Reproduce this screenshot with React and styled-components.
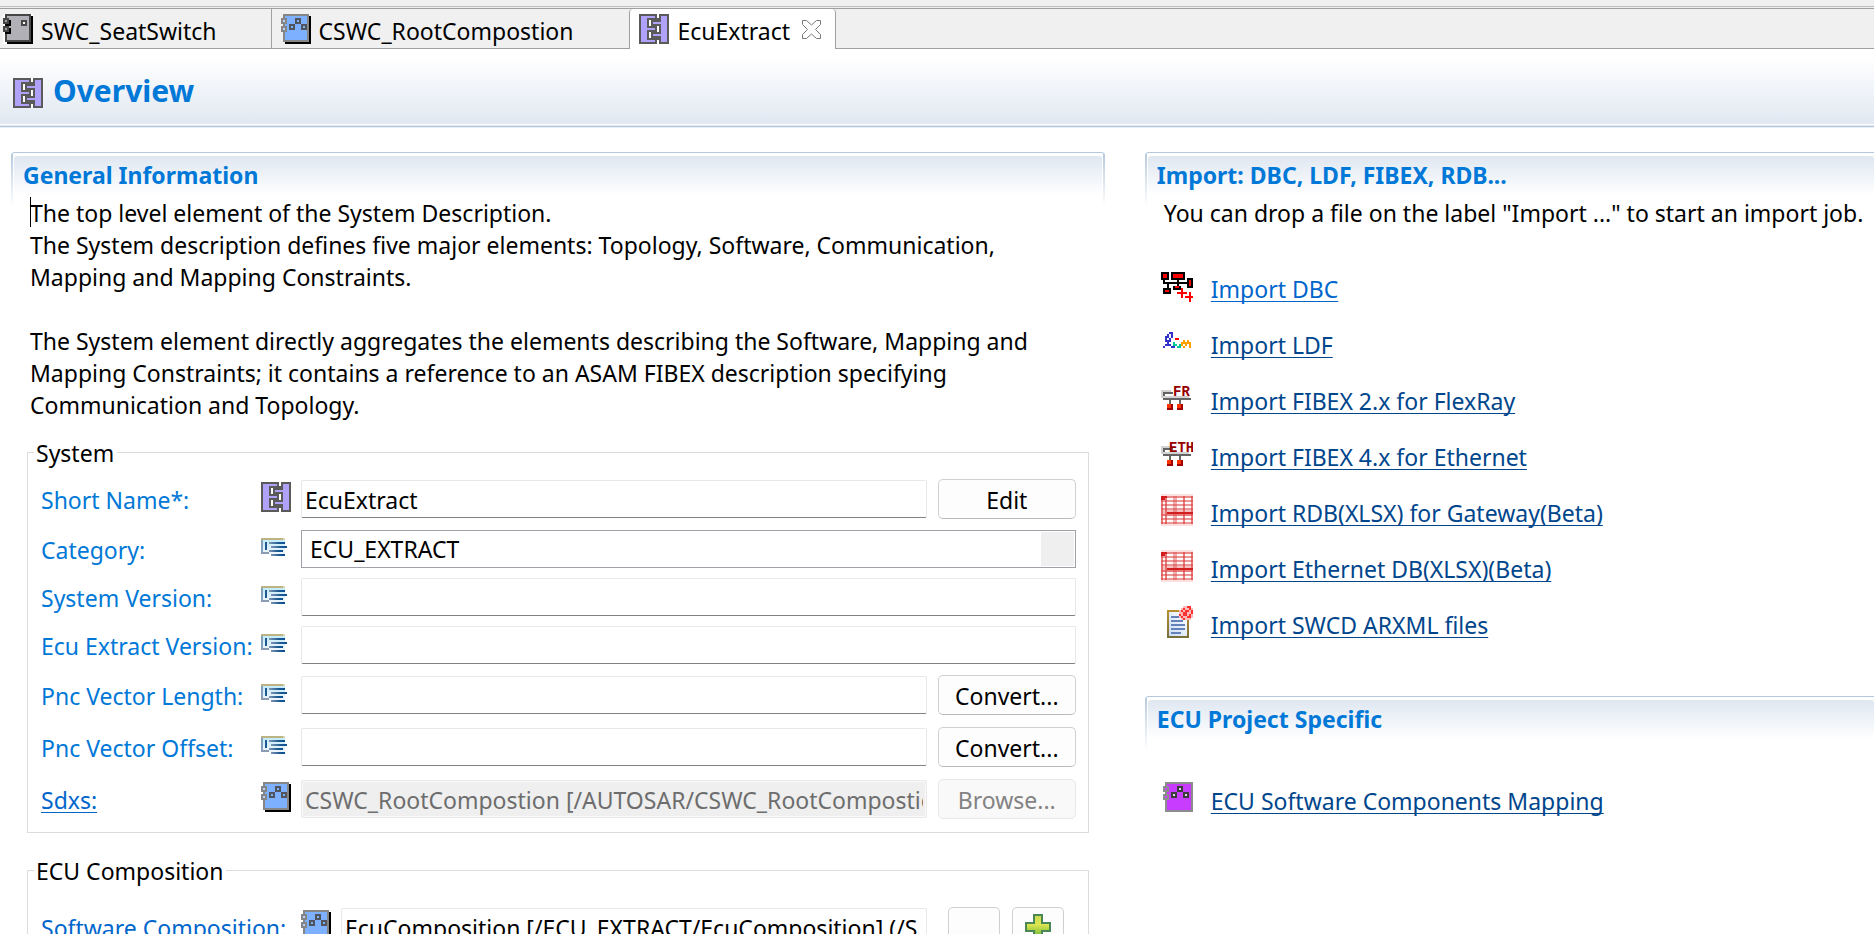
import React from 'react'
import styled, { createGlobalStyle, css } from 'styled-components'

/* ---------- icons ---------- */

const PixelMap = ({ rows, colors, x = 0, y = 0 }) =>
  rows.map((row, r) =>
    [...row].map((key, c) =>
      colors[key] ? (
        <rect
          key={`${r}-${c}`}
          x={x + c}
          y={y + r}
          width='1'
          height='1'
          fill={colors[key]}
        />
      ) : null
    )
  )

const systemRows = [
  '#########.#####',
  '#ooooooo#.#ooo#',
  '#ooo#######ooo#',
  '#ooo#.#####ooo#',
  '#ooo#.#ooooooo#',
  '#ooo#.#####ooo#',
  '#ooo#####.#ooo#',
  '#ooooooo#.#ooo#',
  '#ooo#####.#ooo#',
  '#ooo#.#####ooo#',
  '#ooo#.#ooooooo#',
  '#ooo#.#####ooo#',
  '#ooo#######ooo#',
  '#ooooooo#.#ooo#',
  '#########.#####',
]

const SystemIcon = () => (
  <svg width='30' height='30' viewBox='0 0 15 15' shapeRendering='crispEdges'>
    <rect width='15' height='15' fill='#fff' />
    <PixelMap rows={systemRows} colors={{ '#': '#5a5a5a', o: '#b0a2f8' }} />
  </svg>
)

const Port = ({ x, y, stroke, fill }) => (
  <>
    <rect x={x} y={y} width='3' height='3' fill={stroke} />
    <rect x={x + 1} y={y + 1} width='1' height='1' fill={fill} />
  </>
)

const SwcIcon = () => (
  <svg width='30' height='30' viewBox='0 0 15 15' shapeRendering='crispEdges'>
    <rect width='15' height='15' fill='#fff' />
    <rect x='2' y='1' width='13' height='14' fill='#000' />
    <rect x='1' y='0' width='13' height='14' fill='#464646' />
    <rect x='2' y='1' width='11' height='12' fill='#b0b0b6' />
    <path d='M1 3h3v3H1zM1 7h3v3H1z' fill='#000' />
    <Port x={0} y={2} stroke='#464646' fill='#a0a0a0' />
    <Port x={0} y={6} stroke='#464646' fill='#a0a0a0' />
    <Port x={9} y={3} stroke='#464646' fill='#fff' />
  </svg>
)

const CompositionIcon = () => (
  <svg width='30' height='30' viewBox='0 0 15 15' shapeRendering='crispEdges'>
    <rect x='2' y='1' width='13' height='14' fill='#000' />
    <rect x='1' y='0' width='13' height='14' fill='#868686' />
    <rect x='2' y='1' width='11' height='12' fill='#7db1ff' />
    <Port x={0} y={2} stroke='#868686' fill='#b4d2ff' />
    <Port x={0} y={6} stroke='#868686' fill='#b4d2ff' />
    <Port x={7} y={2} stroke='#50545c' fill='#7db1ff' />
    <Port x={4} y={5} stroke='#50545c' fill='#7db1ff' />
    <Port x={10} y={5} stroke='#50545c' fill='#7db1ff' />
  </svg>
)

const AttributeIcon = () => (
  <svg width='26' height='18' viewBox='0 0 13 9' shapeRendering='crispEdges'>
    <defs>
      <linearGradient id='attrLine' x1='0' x2='1'>
        <stop offset='0' stopColor='#8096b4' />
        <stop offset='0.6' stopColor='#1e5a91' />
        <stop offset='1' stopColor='#0a5096' />
      </linearGradient>
      <linearGradient id='attrFill' x1='0' x2='0' y1='0' y2='1'>
        <stop offset='0' stopColor='#c3ebfa' />
        <stop offset='1' stopColor='#f0f5fa' />
      </linearGradient>
    </defs>
    <rect x='0' y='1' width='12' height='7' fill='url(#attrFill)' />
    <rect x='0' y='0' width='11' height='1' fill='#bcb482' />
    <rect x='11' y='0' width='1' height='1' fill='#dcd8b4' />
    <rect x='0' y='1' width='1' height='7' fill='#82a0be' />
    <rect x='0' y='7' width='4' height='1' fill='#8c9ab4' />
    <rect x='2' y='2' width='1' height='4' fill='#1e5a91' />
    <rect x='4' y='2' width='8' height='1' fill='url(#attrLine)' />
    <rect x='5' y='4' width='8' height='1' fill='url(#attrLine)' />
    <rect x='4' y='6' width='7' height='1' fill='url(#attrLine)' />
    <rect x='5' y='8' width='7' height='1' fill='url(#attrLine)' />
  </svg>
)

const CloseIcon = () => (
  <svg width='19' height='19' viewBox='0 0 19 19'>
    <path
      d='M.5.5h4l5 4.500 5-4.500h4v4l-5 5 5 5v4h-4l-5-4.500-5 4.500h-4v-4l5-5-5-5z'
      fill='#fff'
      stroke='#787878'
    />
  </svg>
)

const PlusIcon = () => (
  <svg width='26' height='26' viewBox='0 0 13 13'>
    <defs>
      <linearGradient id='plusFill' x1='0' x2='0' y1='0' y2='1'>
        <stop offset='0' stopColor='#c8dc50' />
        <stop offset='0.4' stopColor='#dce650' />
        <stop offset='1' stopColor='#5aaf32' />
      </linearGradient>
    </defs>
    <path
      d='M4.500.5h4v4h4v4h-4v4h-4v-4h-4v-4h4z'
      fill='url(#plusFill)'
      stroke='#4b8755'
    />
  </svg>
)

const DbcIcon = () => (
  <svg width='32' height='32' viewBox='0 0 16 16' shapeRendering='crispEdges'>
    <path
      d='M0 1h4v4H0zM5 1h7v4H5zM13 4h3v5h-3zM1 5h1v1H1zM8 5h1v1H8zM1 6h12v1H1zM3 7h1v2H3zM8 7h1v1H8zM1 9h4v3H1zM6 8h4v2H6z'
      fill='#000'
    />
    <path
      d='M1 2h2v2H1zM6 2h5v2H6zM14 5h1v3h-1zM2 10h2v1H2zM7 8h2v1H7z'
      fill='#f00'
    />
    <path d='M8 11h5v1H8zM10 9h1v5h-1zM12 13h4v1h-4zM14 11h1v5h-1z' fill='#f00' />
  </svg>
)

const ldfRows = [
  '...bb.........',
  '..b.b.........',
  '.bb.b.........',
  '.b.b..rr......',
  '.bbb......o.o.',
  '..b..g...ooooo',
  '.bbb.gg.go.o.o',
  'b...bb.gg.o..o',
]

const LdfIcon = () => (
  <svg width='32' height='32' viewBox='0 0 16 16' shapeRendering='crispEdges'>
    <PixelMap
      rows={ldfRows}
      colors={{ b: '#3232c8', r: '#f00', g: '#00c896', o: '#ffa000' }}
      x={1}
      y={3}
    />
  </svg>
)

const FibexIcon = ({ tag, start }) => (
  <svg width='32' height='32' viewBox='0 0 32 32' shapeRendering='crispEdges'>
    <path d='M0 8h10v2H4v4h24v2H0z' fill='#d2d2d2' />
    <path d='M2 10h10v2H4v4H2zM2 16h28v2H2zM8 18h2v4H8zM18 18h2v4h-2z' fill='#646464' />
    <path d='M4 12h8v4H4z' fill='#fff' />
    <path d='M0 12h2v4H0zM2 14h26v2H2z' fill='#d2d2d2' />
    <path d='M6 22h6v6H6zM16 22h6v6h-6z' fill='#a00000' />
    <path d='M6 22h4v4H6zM16 22h4v4h-4z' fill='#ff3200' />
    <text
      x={start}
      y='14'
      fill='#960000'
      fontFamily='"Liberation Mono", monospace'
      fontSize='14'
      fontWeight='700'>
      {tag}
    </text>
  </svg>
)

const SheetIcon = () => (
  <svg width='32' height='32' viewBox='0 0 16 16' shapeRendering='crispEdges'>
    <rect width='16' height='16' fill='#fbe0e0' />
    <path
      d='M1 2h1v13H1zM3 2h3v13H3zM8 2h3v13H8zM12 2h3v13h-3z'
      fill='#fffafa'
    />
    <path
      d='M0 1h16v1H0zM0 3h16v1H0zM0 5h16v1H0zM0 7h16v1H0zM0 10h16v1H0zM0 12h16v1H0zM0 14h16v1H0z'
      fill='#dc4646'
      opacity='0.55'
    />
    <path d='M0 1h1v14H0zM2 1h1v14H2zM11 1h1v14h-1zM15 1h1v14h-1z' fill='#dc3c3c' opacity='0.6' />
    <path d='M6 1h2v14H6z' fill='#dc3c3c' opacity='0.3' />
    <path d='M0 8h16v3H0z' fill='#e15050' opacity='0.35' />
    <path d='M0 1h3v1H0zM0 2h2v1H0zM3 9h13v1H3z' fill='#d21e1e' />
  </svg>
)

const badgeRows = [
  '..pprr.',
  '.prpprp',
  'prprrpr',
  'pprrppr',
  'rprrprp',
  'prpprrp',
  '.prppp.',
]

const ArxmlIcon = () => (
  <svg width='32' height='32' viewBox='0 0 16 16' shapeRendering='crispEdges'>
    <defs>
      <linearGradient id='arxmlBorder' x1='0' x2='0' y1='0' y2='1'>
        <stop offset='0' stopColor='#b9912d' />
        <stop offset='1' stopColor='#786e3c' />
      </linearGradient>
      <linearGradient id='arxmlPage' x1='0' x2='1' y1='1' y2='0'>
        <stop offset='0' stopColor='#c8dcf5' />
        <stop offset='1' stopColor='#fff' />
      </linearGradient>
    </defs>
    <rect x='3' y='2' width='11' height='14' fill='url(#arxmlBorder)' />
    <rect x='4' y='3' width='9' height='12' fill='url(#arxmlPage)' />
    <path
      d='M5 5h4v1H5zM5 7h6v1H5zM5 9h7v1H5zM5 11h7v1H5zM5 13h5v1H5z'
      fill='#6482b9'
    />
    <PixelMap rows={badgeRows} colors={{ p: '#ffb9b9', r: '#fa3232' }} x={9} />
  </svg>
)

const MappingIcon = () => (
  <svg width='32' height='32' viewBox='0 0 16 16' shapeRendering='crispEdges'>
    <rect x='2' y='0' width='14' height='15' fill='#8c8c8c' />
    <rect x='3' y='1' width='12' height='13' fill='#c83cff' />
    <Port x={1} y={2} stroke='#8c8c8c' fill='#c83cff' />
    <Port x={1} y={6} stroke='#8c8c8c' fill='#c83cff' />
    <Port x={8} y={2} stroke='#3c3c3c' fill='#e6c8f0' />
    <Port x={5} y={5} stroke='#3c3c3c' fill='#e6c8f0' />
    <Port x={11} y={5} stroke='#3c3c3c' fill='#e6c8f0' />
  </svg>
)

/* ---------- data ---------- */

const tabs = [
  { name: 'SWC_SeatSwitch', icon: <SwcIcon /> },
  { name: 'CSWC_RootCompostion', icon: <CompositionIcon /> },
  { name: 'EcuExtract', icon: <SystemIcon />, active: true },
]

const fields = [
  { id: 'shortName', label: 'Short Name*:', icon: <SystemIcon />, value: 'EcuExtract', action: 'Edit' },
  { id: 'category', label: 'Category:', icon: <AttributeIcon />, options: ['ECU_EXTRACT'] },
  { id: 'systemVersion', label: 'System Version:', icon: <AttributeIcon />, value: '' },
  { id: 'ecuExtractVersion', label: 'Ecu Extract Version:', icon: <AttributeIcon />, value: '' },
  { id: 'pncLength', label: 'Pnc Vector Length:', icon: <AttributeIcon />, value: '', action: 'Convert...' },
  { id: 'pncOffset', label: 'Pnc Vector Offset:', icon: <AttributeIcon />, value: '', action: 'Convert...' },
  {
    id: 'sdxs',
    label: 'Sdxs:',
    icon: <CompositionIcon />,
    value: 'CSWC_RootCompostion [/AUTOSAR/CSWC_RootCompostion]',
    action: 'Browse...',
    link: true,
    disabled: true,
  },
]

const imports = [
  { name: 'Import DBC', icon: <DbcIcon />, fresh: true },
  { name: 'Import LDF', icon: <LdfIcon /> },
  { name: 'Import FIBEX 2.x for FlexRay', icon: <FibexIcon tag='FR' start={12} /> },
  { name: 'Import FIBEX 4.x for Ethernet', icon: <FibexIcon tag='ETH' start={8} /> },
  { name: 'Import RDB(XLSX) for Gateway(Beta)', icon: <SheetIcon /> },
  { name: 'Import Ethernet DB(XLSX)(Beta)', icon: <SheetIcon /> },
  { name: 'Import SWCD ARXML files', icon: <ArxmlIcon /> },
]

const projectLinks = [
  { name: 'ECU Software Components Mapping', icon: <MappingIcon /> },
]

/* ---------- components ---------- */

const Field = ({ field }) => (
  <FieldRow $tall={Boolean(field.action)}>
    <FieldLabel htmlFor={field.id}>
      {field.link ? <LabelLink href='#sdxs'>{field.label}</LabelLink> : field.label}
    </FieldLabel>
    <FieldIcon>{field.icon}</FieldIcon>
    {field.options ? (
      <Select id={field.id}>
        {field.options.map((option) => (
          <option key={option}>{option}</option>
        ))}
      </Select>
    ) : (
      <Input id={field.id} type='text' defaultValue={field.value} disabled={field.disabled} />
    )}
    {field.action && (
      <Button type='button' disabled={field.disabled}>
        {field.action}
      </Button>
    )}
  </FieldRow>
)

const LinkList = ({ items }) => (
  <List>
    {items.map((item) => (
      <ListItem key={item.name}>
        <ListIcon>{item.icon}</ListIcon>
        <ListLink href='#import' $fresh={item.fresh}>
          {item.name}
        </ListLink>
      </ListItem>
    ))}
  </List>
)

const App = () => {
  return (
    <>
      <GlobalStyle />
      <TabBar>
        {tabs.map((tab) => (
          <Tab key={tab.name} type='button' $active={tab.active}>
            {tab.icon}
            <TabName>{tab.name}</TabName>
            {tab.active && (
              <TabClose>
                <CloseIcon />
              </TabClose>
            )}
          </Tab>
        ))}
        <TabFiller />
      </TabBar>

      <Header>
        <HeaderIcon>
          <SystemIcon />
        </HeaderIcon>
        <h1>Overview</h1>
      </Header>

      <Main>
        <Column>
          <Section $closed>
            <SectionTitle>General Information</SectionTitle>
            <Description>
              <Caret />
              <p>The top level element of the System Description.</p>
              <p>
                The System description defines five major elements: Topology, Software,
                Communication,
                <br />
                Mapping and Mapping Constraints.
              </p>
              <br />
              <p>
                The System element directly aggregates the elements describing the Software,
                Mapping and
                <br />
                Mapping Constraints; it contains a reference to an ASAM FIBEX description
                specifying
                <br />
                Communication and Topology.
              </p>
            </Description>

            <Group>
              <legend>System</legend>
              <Fields>
                {fields.map((field) => (
                  <Field key={field.id} field={field} />
                ))}
              </Fields>
            </Group>

            <Group>
              <legend>ECU Composition</legend>
              <Fields $spaced>
                <FieldRow $tall>
                  <FieldLabel htmlFor='composition' $wide>
                    Software Composition:
                  </FieldLabel>
                  <FieldIcon>
                    <CompositionIcon />
                  </FieldIcon>
                  <Input
                    id='composition'
                    type='text'
                    defaultValue='EcuComposition [/ECU_EXTRACT/EcuComposition] (/S'
                  />
                  <SmallButtons>
                    <Button type='button' aria-label='Browse' $small />
                    <Button type='button' aria-label='Add' $small>
                      <PlusIcon />
                    </Button>
                  </SmallButtons>
                </FieldRow>
              </Fields>
            </Group>
          </Section>
        </Column>

        <Column>
          <Section>
            <SectionTitle>Import: DBC, LDF, FIBEX, RDB...</SectionTitle>
            <Hint>You can drop a file on the label "Import ..." to start an import job.</Hint>
            <LinkList items={imports} />
          </Section>
          <Section>
            <SectionTitle>ECU Project Specific</SectionTitle>
            <LinkList items={projectLinks} />
          </Section>
        </Column>
      </Main>
    </>
  )
}
export default App

/* ---------- styles ---------- */

const GlobalStyle = createGlobalStyle`
  * {
    box-sizing: border-box;
  }
  html, body {
    height: 100%;
    overflow: hidden;
  }
  body {
    margin: 0;
    background: #fff;
    color: #000;
    font-family: 'Noto Sans', 'Open Sans', sans-serif;
    font-size: 23px;
    line-height: 32px;
  }
  h1, h2, p, ul {
    margin: 0;
    padding: 0;
  }
  button, input, select {
    font: inherit;
    color: inherit;
  }
  svg {
    display: block;
    flex: none;
  }
`

const TabBar = styled.nav`
  display: flex;
  height: 49px;
  padding-top: 9px;
  background: linear-gradient(
    #f0f0f0 6px,
    #bebebe 6px 7px,
    #f0f0f0 7px 8px,
    #a0a0a0 8px 9px,
    #f0f0f0 9px
  );
`

const Tab = styled.button`
  display: flex;
  align-items: flex-start;
  gap: 8px;
  padding: 5px 56px 0 9px;
  border: 0 solid #a0a0a0;
  border-bottom-width: 1px;
  background: none;
  line-height: 32px;

  &:first-child {
    padding-left: 3px;
    padding-right: 54px;
    border-right-width: 1px;
  }

  ${(props) =>
    props.$active &&
    css`
      padding-right: 14px;
      background: #fff;
      border-width: 0 1px;
      border-radius: 4px 4px 0 0;
    `}
`

const TabName = styled.span`
  padding-top: 1px;
`

const TabClose = styled.span`
  padding: 6px 0 0 4px;
`

const TabFiller = styled.div`
  flex: 1;
  border-bottom: 1px solid #a0a0a0;
`

const Header = styled.header`
  display: flex;
  align-items: center;
  gap: 10px;
  height: 79px;
  padding: 19px 13px 18px;
  background: linear-gradient(
    #fff,
    #fff 8px,
    #e1e8f2 75px,
    #fff 75px 76px,
    #e1e8f2 76px 77px,
    #b4c8dc 77px 78px,
    #e8eef5 78px
  );
  h1 {
    padding-top: 4px;
    font-size: 30px;
    line-height: 42px;
    font-weight: 700;
    color: #0078d7;
  }
`

const HeaderIcon = styled.span`
  padding-top: 8px;
`

const Main = styled.main`
  display: grid;
  grid-template-columns: minmax(0, 3fr) minmax(0, 2fr);
  column-gap: 40px;
  padding: 24px 0 0 11px;
`

const Column = styled.div`
  display: flex;
  flex-direction: column;
  gap: 54px;
`

const fade = 'linear-gradient(#b4c8dc, #fff)'

const Section = styled.section`
  border-top: 1px solid #b4c8dc;
  border-radius: ${(props) => (props.$closed ? '4px 4px 0 0' : '4px 0 0 0')};
  padding: 3px ${(props) => (props.$closed ? '3px' : '0')} 0 3px;
  background: ${(props) => (props.$closed ? `${fade} right top / 2px 53px no-repeat, ` : '')}
    ${fade} left top / 2px 53px no-repeat;
`

const SectionTitle = styled.h2`
  height: 41px;
  padding: 3px 9px 0;
  border-radius: 3px 3px 0 0;
  background: linear-gradient(#dfe7f1, #fff 39px);
  font-size: 23px;
  line-height: 32px;
  font-weight: 700;
  color: #0078d7;
`

const Description = styled.div`
  position: relative;
  padding: 0 16px;
  white-space: nowrap;
`

const Caret = styled.span`
  position: absolute;
  top: 0;
  left: 16px;
  width: 1px;
  height: 30px;
  background: #000;
`

const Hint = styled.p`
  padding-left: 16px;
  white-space: nowrap;
`

const Group = styled.fieldset`
  min-width: 0;
  margin: 14px 13px 20px;
  padding: 0 6px 12px;
  border: 1px solid #dcdcdc;
  legend {
    padding: 2px 3px 0 2px;
  }
  & + & {
    margin-top: 0;
  }
`

const Fields = styled.div`
  display: flex;
  flex-direction: column;
  gap: 10px;
  padding: ${(props) => (props.$spaced ? '19px' : '9px')} 6px 0 7px;
`

const FieldRow = styled.div`
  display: flex;
  align-items: center;
  height: ${(props) => (props.$tall ? '42px' : '38px')};
`

const FieldLabel = styled.label`
  flex: none;
  width: ${(props) => (props.$wide ? '260px' : '220px')};
  padding-top: 1px;
  color: ${(props) => (props.$wide ? '#0066cc' : '#0078d7')};
  white-space: nowrap;
`

const LabelLink = styled.a`
  color: #0066cc;
  text-decoration-thickness: 1px;
  text-underline-offset: 3px;
`

const FieldIcon = styled.span`
  flex: none;
  width: 40px;
  padding-bottom: 4px;
`

const Input = styled.input`
  flex: 1;
  min-width: 0;
  height: 38px;
  padding: 2px 3px 0;
  border: 1px solid #e8e8e8;
  border-bottom-color: #828282;
  border-radius: 2px;
  background: #fff;
  outline: none;
  &:disabled {
    border-bottom-color: #e8e8e8;
    background: #efefef;
    box-shadow: inset 0 0 0 1px #fafafa;
    color: #6d6d6d;
  }
`

const Select = styled.select`
  flex: 1;
  min-width: 0;
  height: 38px;
  padding: 0 40px 0 8px;
  border: 1px solid #a0a0a8;
  border-radius: 0;
  appearance: none;
  background: linear-gradient(#efefef, #efefef) right 1px center / 33px 34px no-repeat #fff;
`

const Button = styled.button`
  display: flex;
  align-items: center;
  justify-content: center;
  width: ${(props) => (props.$small ? '52px' : '138px')};
  height: 40px;
  margin-left: ${(props) => (props.$small ? '0' : '11px')};
  padding: ${(props) => (props.$small ? '0' : '2px 0 0')};
  border: 1px solid #d0d0d0;
  border-bottom-color: #bababa;
  border-radius: 5px;
  background: #fdfdfd;
  &:disabled {
    border-color: #e8e8e8;
    background: #f9f9f9;
    color: #838383;
  }
`

const SmallButtons = styled.div`
  display: flex;
  gap: 12px;
  padding: 0 12px 0 21px;
`

const List = styled.ul`
  display: flex;
  flex-direction: column;
  gap: 20px;
  margin-top: 41px;
  padding-left: 13px;
  list-style: none;
`

const ListItem = styled.li`
  display: flex;
  align-items: center;
  gap: 18px;
`

const ListIcon = styled.span`
  padding-bottom: 4px;
`

const ListLink = styled.a`
  padding-top: 2px;
  color: ${(props) => (props.$fresh ? '#0066cc' : '#00468c')};
  text-decoration-thickness: 1px;
  text-underline-offset: 3px;
  text-decoration-skip-ink: none;
  white-space: nowrap;
`
